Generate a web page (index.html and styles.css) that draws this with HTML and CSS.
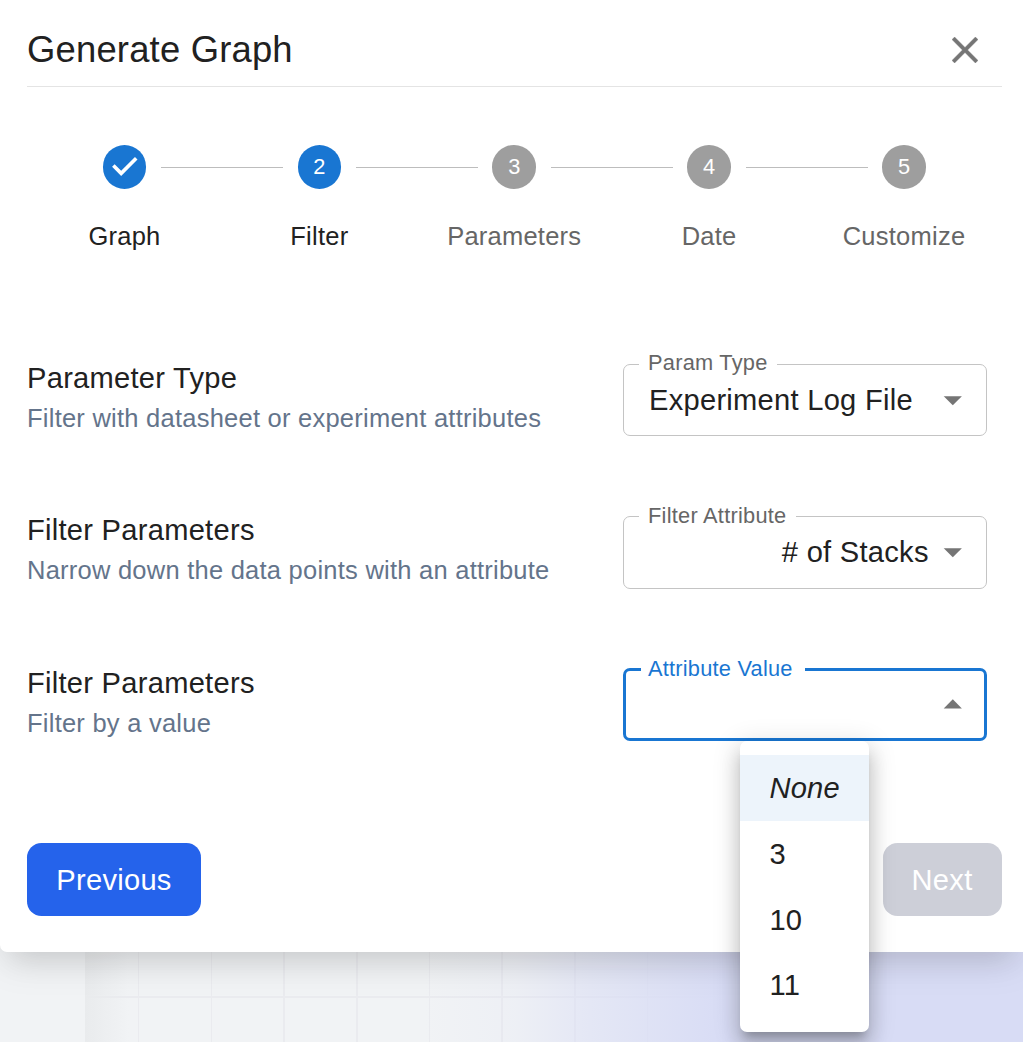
FILE: index.html
```html
<!DOCTYPE html>
<html lang="en">
<head>
<meta charset="utf-8">
<title>Generate Graph</title>
<link rel="stylesheet" href="styles.css">
</head>
<body>
<div class="backdrop"><div class="rail"></div><div class="board"></div></div>
<main class="dialog">
  <header class="header">
    <h1 class="title">Generate Graph</h1>
    <button class="close" aria-label="Close"><svg viewBox="5 5 14 14"><path d="M19 6.41 17.59 5 12 10.59 6.41 5 5 6.41 10.59 12 5 17.59 6.41 19 12 13.41 17.59 19 19 17.59 13.41 12z"/></svg></button>
  </header>
  <ol class="stepper">
    <li class="step on"><div class="track"><span class="dot"><svg viewBox="0 0 24 24"><path d="m10 17-5-5 1.4-1.4 3.6 3.6 7.6-7.6L19 8z"/></svg></span></div><span class="name">Graph</span></li>
    <li class="step on"><div class="track"><span class="dot">2</span></div><span class="name">Filter</span></li>
    <li class="step"><div class="track"><span class="dot">3</span></div><span class="name">Parameters</span></li>
    <li class="step"><div class="track"><span class="dot">4</span></div><span class="name">Date</span></li>
    <li class="step"><div class="track"><span class="dot">5</span></div><span class="name">Customize</span></li>
  </ol>
  <section class="rows">
    <div class="row">
      <div class="text"><h2>Parameter Type</h2><p>Filter with datasheet or experiment attributes</p></div>
      <fieldset class="field"><legend>Param Type</legend><div class="select"><span class="value start">Experiment Log File</span><svg class="arrow" viewBox="0 0 24 24"><path d="m7 10 5 5 5-5z"/></svg></div></fieldset>
    </div>
    <div class="row">
      <div class="text"><h2>Filter Parameters</h2><p>Narrow down the data points with an attribute</p></div>
      <fieldset class="field"><legend>Filter Attribute</legend><div class="select"><span class="value"># of Stacks</span><svg class="arrow" viewBox="0 0 24 24"><path d="m7 10 5 5 5-5z"/></svg></div></fieldset>
    </div>
    <div class="row">
      <div class="text"><h2>Filter Parameters</h2><p>Filter by a value</p></div>
      <fieldset class="field focused"><legend>Attribute Value</legend><div class="select"><span class="value"></span><svg class="arrow up" viewBox="0 0 24 24"><path d="m7 10 5 5 5-5z"/></svg></div></fieldset>
    </div>
  </section>
  <footer class="actions">
    <button class="btn">Previous</button>
    <button class="btn disabled" disabled>Next</button>
  </footer>
</main>
<ul class="menu">
  <li class="selected"><em>None</em></li>
  <li>3</li>
  <li>10</li>
  <li>11</li>
</ul>
</body>
</html>
```
FILE: styles.css
```css
* { box-sizing: border-box; }
body {
  margin: 0;
  width: 1023px;
  height: 1042px;
  overflow: hidden;
  position: relative;
  font-family: "Liberation Sans", Arial, sans-serif;
  font-size: 29.1px;
  letter-spacing: 0.27px;
  color: #212121;
}
h1, h2, p, ol, ul { margin: 0; padding: 0; font-weight: 400; list-style: none; }
button { font: inherit; letter-spacing: inherit; border: 0; padding: 0; }

.backdrop { position: absolute; inset: 0; display: flex; background: #f1f3f5; }
.rail { width: 85px; }
.board {
  flex: 1;
  background:
    linear-gradient(90deg, #e9ebed, #e9ebed00 44px),
    linear-gradient(90deg, #d8dcf500 340px, #d8dcf526 430px, #d8dcf580 500px, #d8dcf5 640px),
    repeating-linear-gradient(90deg, transparent 0 53px, #eaebef 53px 54.5px, transparent 54.5px 72.7px),
    linear-gradient(transparent 996px, #eaebef 996px 998px, transparent 998px);
}

.dialog {
  position: relative;
  height: 952px;
  padding: 0 21.5px 0 27px;
  background: #fff;
  border-radius: 0 0 0 7px;
  box-shadow: 0 20px 27px -13px rgba(0,0,0,.1), 0 10px 40px 0 rgba(0,0,0,.09);
}
.header {
  display: flex;
  justify-content: space-between;
  align-items: center;
  height: 87px;
  padding: 13px 24px 0 0;
  border-bottom: 1px solid #e4e4e4;
}
.title { font-size: 36.4px; line-height: 58px; letter-spacing: 0.2px; }
.close { width: 26px; height: 26px; background: none; }
.close svg { display: block; fill: #757575; stroke: #757575; stroke-width: .2; }

.stepper { display: grid; grid-template-columns: repeat(5, 1fr); padding-top: 58px; height: 265px; }
.step { color: #666; font-size: 25.5px; letter-spacing: 0.24px; text-align: center; }
.step.on { color: #212121; }
.track { display: flex; align-items: center; gap: 14.6px; height: 43.6px; }
.track::before, .track::after { content: ""; flex: 1; height: 1px; margin-top: 1px; background: #bdbdbd; }
.step:first-child .track::before, .step:last-child .track::after { background: none; }
.dot {
  width: 43.6px;
  height: 43.6px;
  border-radius: 50%;
  background: #9e9e9e;
  color: #fff;
  font-size: 21.8px;
  letter-spacing: 0;
  line-height: 43.6px;
}
.on .dot { background: #1976d2; }
.dot svg { display: block; width: 43.6px; height: 43.6px; fill: #fff; }
.name { display: block; margin-top: 29px; line-height: 36px; }

.row { display: flex; justify-content: space-between; height: 152.4px; padding-right: 14.5px; }
.text h2 { font-size: 29.1px; line-height: 43.6px; padding-top: 5px; }
.text p { margin-top: -0.7px; color: #64748b; font-size: 25.5px; letter-spacing: 0.24px; line-height: 36.4px; }
.field {
  width: 364px;
  height: 84.5px;
  margin: 0;
  padding: 0 11.7px 0 24.5px;
  border: 1px solid #c4c4c4;
  border-radius: 7px;
}
.row:first-child .field { height: 84px; }
.field legend {
  height: 25px;
  margin-left: -9.5px;
  padding: 0 9.7px 0 9px;
  color: #666;
  font-size: 21.8px;
  letter-spacing: 0.25px;
  line-height: 22px;
}
.row:nth-child(n+2) legend { line-height: 24px; }
.select { display: flex; align-items: center; height: 46px; }
.value { flex: 1; text-align: right; line-height: 42px; }
.value.start { text-align: left; padding-left: 0.5px; }
.arrow { width: 43.6px; height: 43.6px; fill: #757575; }
.value:not(.start) + .arrow { margin-left: 2px; }
.value:not(.start) + .arrow:not(.up) { margin-bottom: 1px; }
.value.start { margin-right: -20px; }
.up { transform: rotate(180deg); }
.focused { border: 3px solid #1976d2; padding: 0 9.7px 0 22.5px; }
.field.focused legend { margin-left: -7.5px; padding: 0 12px 0 7px; letter-spacing: 0.22px; color: #1976d2; }

.actions { display: flex; justify-content: space-between; margin-top: 34px; }
.btn {
  height: 73px;
  padding: 2px 29.3px 0;
  border-radius: 14.5px;
  background: #2563eb;
  color: #fff;
}
.btn.disabled { background: #cdcfd8; padding: 2px 29px 0; }

.menu {
  position: absolute;
  left: 740px;
  top: 741px;
  width: 129px;
  height: 291px;
  padding-top: 14.4px;
  background: #fff;
  border-radius: 7px;
  box-shadow: 0 9px 9px -5.5px rgba(0,0,0,.2), 0 14.5px 18px 2px rgba(0,0,0,.14), 0 5.5px 25.5px 3.6px rgba(0,0,0,.12);
}
.menu li { height: 65.6px; line-height: 66.4px; padding-left: 29.4px; }
.menu .selected { background: #edf4fb; }
```
